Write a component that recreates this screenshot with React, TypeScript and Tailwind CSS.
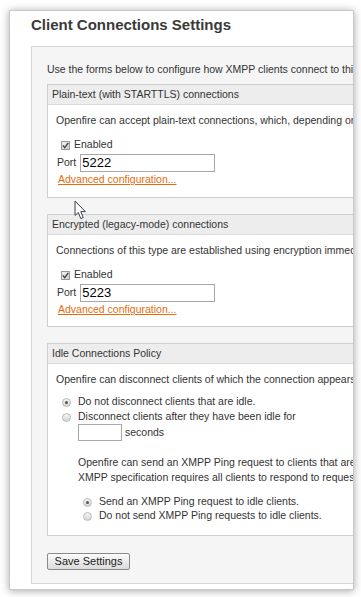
import React from "react";

// Openfire admin: Client Connections Settings page, clipped on the right.

function Checkbox() {
  return (
    <span className="ml-[5px] flex size-[9px] shrink-0 items-center justify-center border border-[#9a9a9a] bg-gradient-to-br from-[#f2f2f2] to-[#cdcdcd]">
      <svg width="7" height="7" viewBox="0 0 7 7" aria-hidden="true">
        <path d="M0.8 3.4 L2.7 5.6 L6.3 0.8" fill="none" stroke="#444" strokeWidth="1.4" />
      </svg>
    </span>
  );
}

function Radio({ checked, className }: { checked?: boolean; className?: string }) {
  return (
    <span
      className={
        "flex size-[9px] shrink-0 items-center justify-center rounded-full border border-[#b8b8b8] bg-gradient-to-b from-[#f6f6f6] to-[#d6d6d6] " +
        (className ?? "")
      }
    >
      {checked && <span className="size-[3px] rounded-full bg-[#555]" />}
    </span>
  );
}

function Section({
  title,
  children,
  className,
}: {
  title: string;
  children: React.ReactNode;
  className?: string;
}) {
  return (
    <div className={"w-[560px] border border-[#cfcfcf] bg-white " + (className ?? "")}>
      <div className="h-[20px] whitespace-nowrap border-b border-[#dadada] bg-[#ededed] pl-[4px] leading-[19px]">
        {title}
      </div>
      {children}
    </div>
  );
}

function PortBlock({ text, port, last }: { text: string; port: string; last?: boolean }) {
  return (
    <div className={"pl-[8px] pt-[8px] " + (last ? "pb-[10px]" : "pb-[11px]")}>
      <p className="whitespace-nowrap leading-[14px]">{text}</p>
      <div className="mt-[11px] flex h-[14px] items-center">
        <Checkbox />
        <span className="ml-[4px]">Enabled</span>
      </div>
      <div className="mt-[2px] flex h-[18px] items-center">
        <span className="ml-[1px]">Port</span>
        <input
          readOnly
          value={port}
          className="ml-[4px] h-[18px] w-[135px] border border-[#a8a8a8] bg-white px-[1px] font-['Liberation_Sans',Arial,sans-serif] text-[13px] text-black outline-none"
        />
      </div>
      <a className="ml-[2px] block w-fit leading-[14px] text-[#e46c0a] underline">
        Advanced configuration...
      </a>
    </div>
  );
}

function Cursor() {
  return (
    <svg
      className="absolute left-[74px] top-[200px]"
      width="14"
      height="21"
      viewBox="0 0 14 21"
      aria-hidden="true"
    >
      <path
        d="M1 1 L1 15.5 L4.3 12.4 L6.8 18.6 L9.2 17.6 L6.8 11.6 L11.4 11.6 Z"
        fill="white"
        stroke="#3a3f4a"
        strokeWidth="1"
        strokeLinejoin="round"
      />
    </svg>
  );
}

export default function App() {
  return (
    <div className="relative h-[597px] w-[361px] overflow-hidden bg-white pl-[9px] pt-[10px] font-['Liberation_Sans',Arial,sans-serif] text-[10.5px] text-[#333]">
      <div className="h-[580px] w-[345px] overflow-hidden border border-[#c8c8c8] bg-white shadow-[0_1px_8px_rgba(0,0,0,0.35)]">
        <h1 className="ml-[21px] mt-[5px] whitespace-nowrap text-[15px] font-bold leading-[18px] text-[#3a3a3a]">
          Client Connections Settings
        </h1>

        <div className="ml-[21px] mt-[12px] h-[538px] w-[600px] border border-[#d5d5d5] bg-[#f5f5f5] pl-[15px] pt-[15px]">
          <p className="whitespace-nowrap leading-[14px]">
            Use the forms below to configure how XMPP clients connect to this server.
          </p>

          <Section title="Plain-text (with STARTTLS) connections" className="mt-[8px]">
            <PortBlock
              text="Openfire can accept plain-text connections, which, depending on the policy that is configured here, can be upgraded to encrypted connections using the STARTTLS protocol."
              port="5222"
            />
          </Section>

          <Section title="Encrypted (legacy-mode) connections" className="mt-[16px]">
            <PortBlock
              text="Connections of this type are established using encryption immediately (as opposed to using STARTTLS)."
              port="5223"
              last
            />
          </Section>

          <Section title="Idle Connections Policy" className="mt-[16px]">
            <div className="pb-[12px] pl-[8px] pt-[8px]">
              <p className="whitespace-nowrap leading-[14px]">
                Openfire can disconnect clients of which the connection appears to be idle.
              </p>
              <div className="mt-[9px] flex h-[14px] items-center">
                <Radio checked className="ml-[6px]" />
                <span className="ml-[7px] whitespace-nowrap">Do not disconnect clients that are idle.</span>
              </div>
              <div className="mt-[1px] flex h-[14px] items-center">
                <Radio className="ml-[6px]" />
                <span className="ml-[7px] whitespace-nowrap">
                  Disconnect clients after they have been idle for
                </span>
              </div>
              <div className="flex h-[17px] items-center pl-[22px]">
                <input readOnly className="h-[17px] w-[44px] border border-[#a8a8a8] bg-white outline-none" />
                <span className="ml-[3px]">seconds</span>
              </div>
              <div className="mt-[14px] whitespace-nowrap pl-[22px] leading-[15px]">
                <p>
                  Openfire can send an XMPP Ping request to clients that are idle, before they are disconnected. The
                </p>
                <p>XMPP specification requires all clients to respond to request.</p>
              </div>
              <div className="mt-[10px] flex h-[14px] items-center">
                <Radio checked className="ml-[27px]" />
                <span className="ml-[7px] whitespace-nowrap">Send an XMPP Ping request to idle clients.</span>
              </div>
              <div className="flex h-[14px] items-center">
                <Radio className="ml-[27px]" />
                <span className="ml-[7px] whitespace-nowrap">
                  Do not send XMPP Ping requests to idle clients.
                </span>
              </div>
            </div>
          </Section>

          <button
            type="button"
            className="mt-[17px] block h-[17px] w-[83px] rounded-[2px] border border-[#8a8a8a] bg-gradient-to-b from-[#fbfbfb] to-[#dcdcdc] text-[11px] leading-[15px] text-[#222]"
          >
            Save Settings
          </button>
        </div>
      </div>
      <Cursor />
    </div>
  );
}
